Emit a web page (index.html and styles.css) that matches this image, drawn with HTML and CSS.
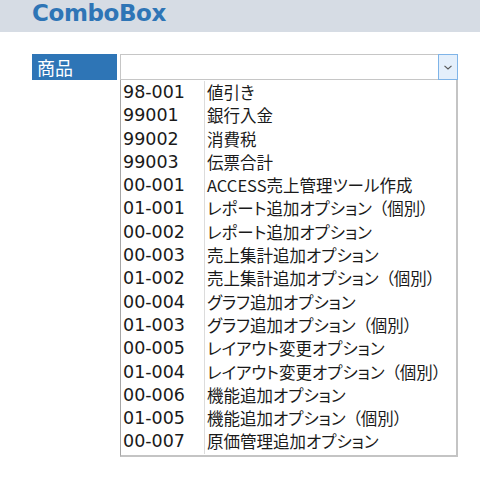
FILE: index.html
```html
<!DOCTYPE html>
<html lang="ja">
<head>
<meta charset="utf-8">
<link rel="stylesheet" href="styles.css">
</head>
<body>
<header class="header"><h1 class="title">ComboBox</h1></header>
<div class="field">
  <div class="label">商品</div>
  <div class="combo">
    <div class="input">
      <div class="input-text"></div>
      <div class="btn"><svg width="8" height="5" viewBox="0 0 8 5"><path d="M0.5 0.8 L4 4 L7.5 0.8" fill="none" stroke="#555" stroke-width="1.1"/></svg></div>
    </div>
    <div class="list">
      <div class="row"><span class="code">98-001</span><span class="name">値引き</span></div>
      <div class="row"><span class="code">99001</span><span class="name">銀行入金</span></div>
      <div class="row"><span class="code">99002</span><span class="name">消費税</span></div>
      <div class="row"><span class="code">99003</span><span class="name">伝票合計</span></div>
      <div class="row"><span class="code">00-001</span><span class="name">ACCESS売上管理ツール作成</span></div>
      <div class="row"><span class="code">01-001</span><span class="name">レポート追加オプション<span class="paren">（個別）</span></span></div>
      <div class="row"><span class="code">00-002</span><span class="name">レポート追加オプション</span></div>
      <div class="row"><span class="code">00-003</span><span class="name">売上集計追加オプション</span></div>
      <div class="row"><span class="code">01-002</span><span class="name">売上集計追加オプション<span class="paren">（個別）</span></span></div>
      <div class="row"><span class="code">00-004</span><span class="name">グラフ追加オプション</span></div>
      <div class="row"><span class="code">01-003</span><span class="name">グラフ追加オプション<span class="paren">（個別）</span></span></div>
      <div class="row"><span class="code">00-005</span><span class="name">レイアウト変更オプション</span></div>
      <div class="row"><span class="code">01-004</span><span class="name">レイアウト変更オプション<span class="paren">（個別）</span></span></div>
      <div class="row"><span class="code">00-006</span><span class="name">機能追加オプション</span></div>
      <div class="row"><span class="code">01-005</span><span class="name">機能追加オプション<span class="paren">（個別）</span></span></div>
      <div class="row"><span class="code">00-007</span><span class="name">原価管理追加オプション</span></div>
    </div>
  </div>
</div>
</body>
</html>
```
FILE: styles.css
```css
html, body {
  margin: 0;
  padding: 0;
  background: #ffffff;
}
body {
  width: 480px;
  height: 480px;
  overflow: hidden;
  font-family: "DejaVu Sans", "Noto Sans CJK JP", sans-serif;
  color: #1a1a1a;
}
.header {
  height: 32px;
  background: #d6dce4;
  box-sizing: border-box;
  padding-left: 32px;
}
.title {
  margin: 0;
  font-family: "DejaVu Sans", sans-serif;
  font-weight: bold;
  font-size: 23px;
  line-height: 27px;
  letter-spacing: -0.4px;
  color: #2e75b6;
}
.field {
  display: flex;
  margin-top: 22px;
  padding-left: 32px;
  gap: 3px;
  align-items: flex-start;
}
.label {
  width: 85px;
  height: 26px;
  box-sizing: border-box;
  background: #2e75b6;
  color: #ffffff;
  font-family: "Noto Sans CJK JP", sans-serif;
  font-size: 18px;
  line-height: 26px;
  padding-left: 5px;
}
.combo {
  width: 338px;
  display: flex;
  flex-direction: column;
}
.input {
  display: flex;
  height: 26px;
  box-sizing: border-box;
}
.input-text {
  flex: 1;
  border: 1px solid #c6c6c6;
  border-right: none;
}
.btn {
  width: 20px;
  box-sizing: border-box;
  border: 1px solid #7fb4e8;
  background: #e4effb;
  display: flex;
  align-items: center;
  justify-content: center;
}
.list {
  width: 338px;
  box-sizing: border-box;
  border-left: 1px solid #a6a6a6;
  border-right: 2px solid #c4c4c4;
  border-bottom: 2px solid #c4c4c4;
  padding-top: 1px;
  padding-bottom: 1px;
}
.row {
  display: flex;
  height: 23.3px;
  align-items: center;
}
.code {
  flex: 0 0 83px;
  box-sizing: border-box;
  padding-left: 2px;
  font-family: "DejaVu Sans", sans-serif;
  font-size: 17.5px;
  line-height: 23.3px;
}
.name {
  flex: 1 1 auto;
  min-width: 0;
  align-self: stretch;
  border-left: 1px solid #dcdcdc;
  padding-left: 2px;
  font-family: "Noto Sans CJK JP", sans-serif;
  font-size: 16.5px;
  font-feature-settings: "palt";
  line-height: 23.3px;
  white-space: nowrap;
  overflow: hidden;
}
.paren {
  margin-left: 7px;
}
```
